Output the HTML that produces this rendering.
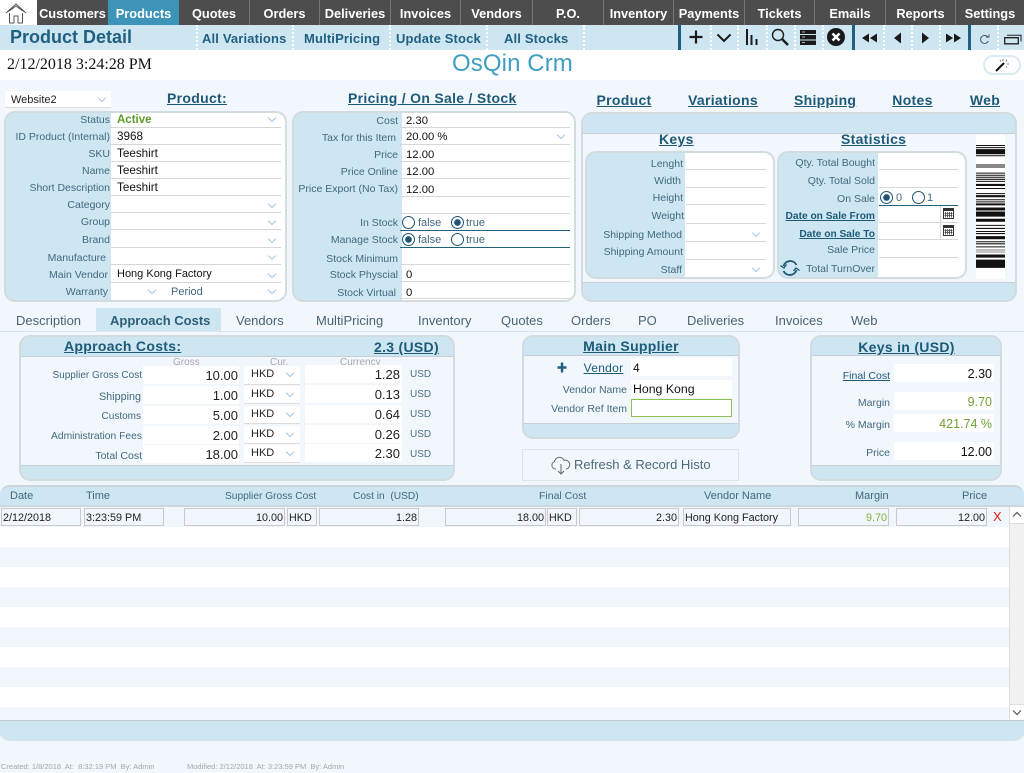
<!DOCTYPE html>
<html><head><meta charset="utf-8"><title>Product Detail</title>
<style>
html,body{margin:0;padding:0;width:1024px;height:773px;overflow:hidden;background:#f2f7fd;font-family:"Liberation Sans",sans-serif;}
#p{position:relative;width:1024px;height:773px;overflow:hidden}
#p div,#p span.a,#p svg{position:absolute}
.b{box-sizing:border-box}
.n{top:0;height:25px;line-height:27px;text-align:center;color:#fff;font-weight:bold;font-size:12.8px;border-left:1px solid #777;box-sizing:border-box;white-space:nowrap}
.s{top:25px;height:25px;line-height:27px;color:#1f5f80;font-weight:bold;font-size:13px;white-space:nowrap;letter-spacing:.15px}
.d{top:25px;height:25px;width:0;border-left:2px dotted #fff}
.k{top:25px;height:25px;width:3px;background:#1f5f80}
.h{color:#1c5a78;font-weight:bold;font-size:14px;letter-spacing:.3px;text-decoration:underline;white-space:nowrap;line-height:16px;text-align:center}
.l{left:0;margin-top:1px;text-align:right;color:#41697e;font-size:10.5px;line-height:14px;white-space:nowrap}
.v{color:#111;font-size:12px;line-height:14px;white-space:nowrap}
.rl{height:0;border-top:1px solid #d6d6d6}
.dk{height:0;border-top:1px solid #1f5f80}
.c{width:5px;height:5px;border-right:1px solid #a3c6ea;border-bottom:1px solid #a3c6ea;transform:rotate(45deg)}
.r{width:11px;height:11px;border:1px solid #1f5570;border-radius:50%;background:#fff;box-sizing:content-box}
.on{background:radial-gradient(circle,#1f5570 0,#1f5570 3px,#fff 3.6px)}
.pn{background:#cde6f2;border:2px solid #d2dcdf;border-radius:11px;box-sizing:border-box;overflow:hidden}
.w{background:#fff}
.g{color:#aaa;font-size:10px;line-height:12px}
.tab{top:308px;height:23px;line-height:26px;font-size:13px;color:#4a6472;white-space:nowrap}
.r1{text-align:right;color:#222;font-size:13px;line-height:16px;white-space:nowrap}
.u{color:#4c6f82;font-size:10px;line-height:12px}
.hk{color:#222;font-size:11px;line-height:14px}
.th{top:490px;color:#41697e;font-size:11px;line-height:13px;white-space:nowrap}
.cell{top:508px;height:18px;box-sizing:border-box;border:1px solid #c9c9c9;background:#f1f6fc;font-size:10.8px;line-height:18px;color:#222;white-space:nowrap;padding:0 1px;overflow:hidden}
.st{left:0;width:1009px;height:20px;background:#f1f6fc}
</style></head><body><div id="p">

<div style="left:0;top:0;width:1024px;height:25px;background:#4d4d4d"></div>
<div style="left:0;top:0;width:37px;height:25px;background:#fff"></div>
<svg style="left:5px;top:2px" width="22" height="22" viewBox="0 0 22 22" fill="none" stroke="#555" stroke-width="1"><path d="M1 11 L11 2 L21 11 M3.5 9.5 L11 4 L18.5 9.5 M4.5 11 V21 H9 V14 H13 V21 H17.5 V11"/></svg>
<div class="n" style="left:37px;width:71px;border-left:0">Customers</div>
<div class="n" style="left:108px;width:71px;background:#3d94b8;border-left:0">Products</div>
<div class="n" style="left:179px;width:70px;border-left:0">Quotes</div>
<div class="n" style="left:249px;width:70px">Orders</div>
<div class="n" style="left:319px;width:71px">Deliveries</div>
<div class="n" style="left:390px;width:70px">Invoices</div>
<div class="n" style="left:460px;width:72px">Vendors</div>
<div class="n" style="left:532px;width:71px">P.O.</div>
<div class="n" style="left:603px;width:70px">Inventory</div>
<div class="n" style="left:673px;width:71px">Payments</div>
<div class="n" style="left:744px;width:70px">Tickets</div>
<div class="n" style="left:814px;width:71px">Emails</div>
<div class="n" style="left:885px;width:70px">Reports</div>
<div class="n" style="left:955px;width:69px">Settings</div>

<div style="left:0;top:25px;width:1024px;height:25px;background:#cde6f2"></div>
<div style="left:10px;top:25px;height:25px;line-height:24px;font-size:18px;font-weight:bold;color:#1f5f80;white-space:nowrap">Product Detail</div>
<div class="s" style="left:202px">All Variations</div>
<div class="s" style="left:304px">MultiPricing</div>
<div class="s" style="left:396px">Update Stock</div>
<div class="s" style="left:504px">All Stocks</div>
<div class="d" style="left:196px"></div><div class="d" style="left:292px"></div><div class="d" style="left:389px"></div><div class="d" style="left:486px"></div><div class="d" style="left:583px"></div>
<div class="k" style="left:678px"></div><div class="k" style="left:852px"></div><div class="k" style="left:968px"></div>
<div class="d" style="left:710px"></div><div class="d" style="left:737px"></div><div class="d" style="left:766px"></div><div class="d" style="left:794px"></div><div class="d" style="left:822px"></div>
<div class="d" style="left:883px"></div><div class="d" style="left:911px"></div><div class="d" style="left:939px"></div><div class="d" style="left:997px"></div>

<svg style="left:688px;top:29px" width="16" height="16" viewBox="0 0 16 16"><path d="M8 1.5V14.5M1.5 8H14.5" stroke="#1a1a1a" stroke-width="2.2"/></svg>
<svg style="left:716px;top:32px" width="16" height="12" viewBox="0 0 16 12"><path d="M1.5 2.5L8 9L14.5 2.5" stroke="#1a1a1a" stroke-width="2" fill="none"/></svg>
<svg style="left:745px;top:29px" width="14" height="17" viewBox="0 0 14 17"><path d="M2 0V16M6.500 6V16M11.500 10V16" stroke="#1a1a1a" stroke-width="2" fill="none"/></svg>
<svg style="left:771px;top:28px" width="18" height="18" viewBox="0 0 18 18"><circle cx="7" cy="7" r="5.5" stroke="#1a1a1a" stroke-width="1.4" fill="none"/><path d="M11 11L17 17" stroke="#1a1a1a" stroke-width="2.4"/></svg>
<svg style="left:800px;top:30px" width="16" height="15" viewBox="0 0 16 15"><path d="M0 0H16V4H0ZM0 5H16V9.500H0ZM0 10.500H16V15H0Z" fill="#1a1a1a"/><path d="M2 2H5M2 7H5M2 12.500H5" stroke="#cde6f2" stroke-width=".8"/></svg>
<svg style="left:827px;top:28px" width="18" height="18" viewBox="0 0 18 18"><circle cx="9" cy="9" r="9" fill="#1a1a1a"/><path d="M5.500 5.500L12.500 12.500M12.500 5.500L5.500 12.500" stroke="#fff" stroke-width="2.600"/></svg>
<svg style="left:862px;top:33px" width="16" height="10" viewBox="0 0 16 10"><path d="M0 5L7 0.500V9.500ZM8 5L15 0.500V9.500Z" fill="#1a1a1a"/></svg>
<svg style="left:893px;top:32px" width="10" height="12" viewBox="0 0 10 12"><path d="M1 6L8 0.500V11.500Z" fill="#1a1a1a"/></svg>
<svg style="left:921px;top:32px" width="10" height="12" viewBox="0 0 10 12"><path d="M8 6L1 0.500V11.500Z" fill="#1a1a1a"/></svg>
<svg style="left:946px;top:33px" width="16" height="10" viewBox="0 0 16 10"><path d="M7 5L0 0.500V9.500ZM15 5L8 0.500V9.500Z" fill="#1a1a1a"/></svg>
<svg style="left:979px;top:34px" width="11" height="11" viewBox="0 0 11 11"><path d="M8.800 3A4 4 0 1 0 9.300 7" stroke="#444" stroke-width=".9" fill="none"/><path d="M7 3H10V0.500" stroke="#444" stroke-width=".9" fill="none"/></svg>
<svg style="left:1004px;top:34px" width="18" height="11" viewBox="0 0 18 11"><path d="M0.700 3.700H14.300V9.800H0.700Z" stroke="#222" stroke-width="1.300" fill="none"/><path d="M3 1.200H17V7.500" stroke="#222" stroke-width="1" fill="none"/></svg>

<div style="left:0;top:50px;width:1024px;height:30px;background:#fff"></div>
<div style="left:7px;top:56px;font-family:'Liberation Serif',serif;font-size:16px;line-height:18px;color:#111;white-space:nowrap">2/12/2018 3:24:28 PM</div>
<div style="left:452px;top:50px;font-size:24px;line-height:28px;color:#3f9fc2;white-space:nowrap;letter-spacing:.1px">OsQin Crm</div>
<div class="b" style="left:983px;top:55px;width:38px;height:20px;border:2px solid #d8ebf5;border-radius:10px;background:#fff"></div>
<svg style="left:995px;top:58px" width="16" height="14" viewBox="0 0 16 14"><path d="M1 13L9 5" stroke="#111" stroke-width="2"/><path d="M8 1V3M12 1.500L11 3.500M14 6H12M12 9.500L11 8.500M5 2L6 3.500" stroke="#777" stroke-width="1"/></svg>

<div class="w" style="left:5px;top:91px;width:106px;height:16px;border-bottom:1px solid #ddd"></div>
<div class="v" style="left:11px;top:93px;font-size:11px;color:#222">Website2</div>
<div class="c" style="left:99px;top:95px"></div>
<div class="h" style="left:167px;top:90px;width:60px">Product:</div>
<div class="h" style="left:348px;top:90px;width:167px">Pricing / On Sale / Stock</div>
<div class="h" style="left:596px;top:92px;width:56px">Product</div>
<div class="h" style="left:688px;top:92px;width:69px">Variations</div>
<div class="h" style="left:794px;top:92px;width:62px">Shipping</div>
<div class="h" style="left:892px;top:92px;width:41px">Notes</div>
<div class="h" style="left:969px;top:92px;width:32px">Web</div>

<!-- Product panel -->
<div class="pn" style="left:4px;top:111px;width:283px;height:191px"><div class="w" style="left:105px;top:-2px;width:180px;height:193px"></div></div>
<div class="rl" style="left:111px;top:127px;width:170px"></div><div class="rl" style="left:111px;top:144px;width:170px"></div><div class="rl" style="left:111px;top:161px;width:170px"></div><div class="rl" style="left:111px;top:178px;width:170px"></div><div class="rl" style="left:111px;top:195px;width:170px"></div><div class="rl" style="left:111px;top:212px;width:170px"></div><div class="rl" style="left:111px;top:229px;width:170px"></div><div class="rl" style="left:111px;top:247px;width:170px"></div><div class="rl" style="left:111px;top:264px;width:170px"></div><div class="rl" style="left:111px;top:282px;width:170px"></div>
<div class="l" style="top:112px;width:110px">Status</div>
<div class="l" style="top:129px;width:110px">ID Product (Internal)</div>
<div class="l" style="top:146px;width:110px">SKU</div>
<div class="l" style="top:163px;width:110px">Name</div>
<div class="l" style="top:180px;width:110px">Short Description</div>
<div class="l" style="top:197px;width:110px">Category</div>
<div class="l" style="top:214px;width:110px">Group</div>
<div class="l" style="top:232px;width:110px">Brand</div>
<div class="l" style="top:250px;width:106px">Manufacture</div>
<div class="l" style="top:267px;width:108px">Main Vendor</div>
<div class="l" style="top:284px;width:108px">Warranty</div>
<div class="v" style="left:117px;top:113px;font-weight:bold;font-size:11.5px;color:#5d9b2a">Active</div>
<div class="v" style="left:117px;top:130px;font-size:11.7px">3968</div>
<div class="v" style="left:117px;top:147px;font-size:11.7px">Teeshirt</div>
<div class="v" style="left:117px;top:164px;font-size:11.7px">Teeshirt</div>
<div class="v" style="left:117px;top:181px;font-size:11.7px">Teeshirt</div>
<div class="v" style="left:117px;top:267px;font-size:11px">Hong Kong Factory</div>
<div class="v" style="left:171px;top:285px;font-size:11px;color:#41697e">Period</div>
<div class="c" style="left:269px;top:115px"></div><div class="c" style="left:269px;top:201px"></div><div class="c" style="left:269px;top:218px"></div><div class="c" style="left:269px;top:236px"></div><div class="c" style="left:269px;top:253px"></div><div class="c" style="left:269px;top:271px"></div><div class="c" style="left:269px;top:287px"></div><div class="c" style="left:149px;top:287px"></div>

<!-- Pricing panel -->
<div class="pn" style="left:292px;top:111px;width:284px;height:191px"><div class="w" style="left:108px;top:-2px;width:176px;height:193px"></div></div>
<div class="rl" style="left:400px;top:127px;width:170px"></div><div class="rl" style="left:400px;top:144px;width:170px"></div><div class="rl" style="left:400px;top:161px;width:170px"></div><div class="rl" style="left:400px;top:178px;width:170px"></div><div class="rl" style="left:400px;top:196px;width:170px"></div><div class="rl" style="left:400px;top:213px;width:170px"></div><div class="dk" style="left:400px;top:230px;width:170px"></div><div class="dk" style="left:400px;top:247px;width:170px"></div><div class="rl" style="left:400px;top:264px;width:170px"></div><div class="rl" style="left:400px;top:281px;width:170px"></div><div class="rl" style="left:400px;top:298px;width:170px"></div>
<div class="l" style="top:113px;width:398px">Cost</div>
<div class="l" style="top:130px;width:396px">Tax for this Item</div>
<div class="l" style="top:147px;width:398px">Price</div>
<div class="l" style="top:164px;width:398px">Price Online</div>
<div class="l" style="top:181px;width:398px">Price Export (No Tax)</div>
<div class="l" style="top:215px;width:398px">In Stock</div>
<div class="l" style="top:232px;width:398px">Manage Stock</div>
<div class="l" style="top:251px;width:398px">Stock Minimum</div>
<div class="l" style="top:267px;width:398px">Stock Physcial</div>
<div class="l" style="top:285px;width:396px">Stock Virtual</div>
<div class="v" style="left:406px;top:114px;font-size:11.3px">2.30</div>
<div class="v" style="left:406px;top:130px;font-size:11.3px">20.00 %</div>
<div class="v" style="left:406px;top:148px;font-size:11.3px">12.00</div>
<div class="v" style="left:406px;top:165px;font-size:11.3px">12.00</div>
<div class="v" style="left:406px;top:183px;font-size:11.3px">12.00</div>
<div class="v" style="left:406px;top:268px;font-size:11.3px">0</div>
<div class="v" style="left:406px;top:286px;font-size:11.3px">0</div>
<div class="c" style="left:558px;top:132px"></div>
<div class="r" style="left:402px;top:216px"></div><div class="r on" style="left:451px;top:216px"></div>
<div class="r on" style="left:402px;top:233px"></div><div class="r" style="left:451px;top:233px"></div>
<div class="v" style="left:418px;top:216px;font-size:11px;color:#41697e">false</div><div class="v" style="left:466px;top:216px;font-size:11px;color:#41697e">true</div>
<div class="v" style="left:418px;top:233px;font-size:11px;color:#41697e">false</div><div class="v" style="left:466px;top:233px;font-size:11px;color:#41697e">true</div>

<!-- Right panel -->
<div class="pn" style="left:581px;top:112px;width:436px;height:190px;background:#cde6f2"><div style="left:0;top:19px;width:432px;height:148px;background:#f2f7fd;border-top:1px solid #c4d0d6;border-bottom:1px solid #c4d0d6"></div></div>
<div class="h" style="left:659px;top:131px;width:34px">Keys</div>
<div class="h" style="left:841px;top:131px;width:64px">Statistics</div>
<div class="pn" style="left:585px;top:151px;width:190px;height:128px"><div class="w" style="left:98px;top:-2px;width:92px;height:128px"></div></div>
<div class="pn" style="left:777px;top:151px;width:190px;height:128px"><div class="w" style="left:99px;top:-2px;width:91px;height:128px"></div></div>
<div class="l" style="top:156px;width:683px">Lenght</div>
<div class="l" style="top:173px;width:681px">Width</div>
<div class="l" style="top:190px;width:683px">Height</div>
<div class="l" style="top:208px;width:684px">Weight</div>
<div class="l" style="top:227px;width:682px">Shipping Method</div>
<div class="l" style="top:244px;width:683px">Shipping Amount</div>
<div class="l" style="top:262px;width:682px">Staff</div>
<div class="rl" style="left:686px;top:169px;width:80px"></div><div class="rl" style="left:686px;top:187px;width:80px"></div><div class="rl" style="left:686px;top:204px;width:80px"></div><div class="rl" style="left:686px;top:223px;width:80px"></div><div class="rl" style="left:686px;top:241px;width:80px"></div><div class="rl" style="left:686px;top:259px;width:80px"></div>
<div class="c" style="left:753px;top:230px"></div><div class="c" style="left:753px;top:265px"></div>
<div class="l" style="top:155px;width:875px">Qty. Total Bought</div>
<div class="l" style="top:173px;width:875px">Qty. Total Sold</div>
<div class="l" style="top:191px;width:875px">On Sale</div>
<div class="l" style="top:209px;width:875px;font-weight:bold;font-size:10.2px;color:#1c5a78;text-decoration:underline">Date on Sale From</div>
<div class="l" style="top:227px;width:875px;font-weight:bold;font-size:10.2px;color:#1c5a78;text-decoration:underline">Date on Sale To</div>
<div class="l" style="top:242px;width:875px">Sale Price</div>
<div class="l" style="top:261px;width:875px">Total TurnOver</div>
<div class="rl" style="left:879px;top:169px;width:79px"></div><div class="rl" style="left:879px;top:187px;width:79px"></div><div class="dk" style="left:879px;top:205px;width:79px"></div><div class="rl" style="left:879px;top:222px;width:79px"></div><div class="rl" style="left:879px;top:239px;width:79px"></div><div class="rl" style="left:879px;top:257px;width:79px"></div>
<div class="r on" style="left:880px;top:191px"></div><div class="r" style="left:912px;top:191px"></div>
<div class="v" style="left:896px;top:191px;font-size:11px;color:#41697e">0</div><div class="v" style="left:927px;top:191px;font-size:11px;color:#41697e">1</div>
<div style="left:940px;top:206px;width:1px;height:33px;background:#d6d6d6"></div>
<svg style="left:943px;top:208px" width="11" height="11" viewBox="0 0 11 11"><path d="M0 0H11V11H0Z" fill="#333"/><path d="M1 3H10V10H1Z" fill="#fff"/><path d="M2.500 4V9.500M4.500 4V9.500M6.500 4V9.500M8.500 4V9.500M1.500 5.500H9.500M1.500 7.500H9.500" stroke="#444" stroke-width=".8"/></svg>
<svg style="left:943px;top:225px" width="11" height="11" viewBox="0 0 11 11"><path d="M0 0H11V11H0Z" fill="#333"/><path d="M1 3H10V10H1Z" fill="#fff"/><path d="M2.500 4V9.500M4.500 4V9.500M6.500 4V9.500M8.500 4V9.500M1.500 5.500H9.500M1.500 7.500H9.500" stroke="#444" stroke-width=".8"/></svg>
<svg style="left:780px;top:259px" width="20" height="18" viewBox="0 0 20 18" fill="none" stroke="#1f5570" stroke-width="1.800"><path d="M3.500 7A7 7 0 0 1 16.500 6"/><path d="M16.500 11A7 7 0 0 1 3.500 12"/><path d="M0.500 6.500L4 9L6.500 5.500" stroke-width="1.300"/><path d="M13.500 12L16 9L19.500 11.500" stroke-width="1.300"/></svg>
<div class="w" style="left:976px;top:135px;width:29px;height:144px"></div>
<svg style="left:976px;top:144px" width="29" height="130" viewBox="0 0 29 127" preserveAspectRatio="none" fill="#111"><path d="M0 1h29v1H0zM0 3h29v1H0zM0 5h29v5H0zM0 11h29v1H0zM0 20h29v1H0zM0 22h29v1H0zM0 28h29v1H0zM0 30h29v1H0zM0 32h29v1H0zM0 34h29v1H0zM0 36h29v1H0zM0 39h29v2H0zM0 43h29v1H0zM0 48h29v1H0zM0 50h29v2H0zM0 54h29v1H0zM0 56h29v1H0zM0 58h29v2H0zM0 62h29v3H0zM0 66h29v5H0zM0 73h29v3H0zM0 79h29v1H0zM0 82h29v1H0zM0 85h29v1H0zM0 87h29v1H0zM0 90h29v3H0zM0 95h29v1H0zM0 97h29v1H0zM0 100h29v1H0zM0 108h29v3H0zM0 113h29v8H0z"/><path d="M0 103h29v1H0zM0 105h29v1H0z" fill="#888"/></svg>

<!-- Tabs -->
<div style="left:0;top:331px;width:1024px;height:1px;background:#d8e5ec"></div>
<div style="left:96px;top:308px;width:125px;height:23px;background:#cde6f2"></div>
<div class="tab" style="left:16px">Description</div>
<div class="tab" style="left:110px;font-weight:bold;color:#2d5f78">Approach Costs</div>
<div class="tab" style="left:236px">Vendors</div>
<div class="tab" style="left:316px">MultiPricing</div>
<div class="tab" style="left:418px">Inventory</div>
<div class="tab" style="left:501px">Quotes</div>
<div class="tab" style="left:571px">Orders</div>
<div class="tab" style="left:638px">PO</div>
<div class="tab" style="left:687px">Deliveries</div>
<div class="tab" style="left:775px">Invoices</div>
<div class="tab" style="left:851px">Web</div>

<!-- Approach -->
<div class="pn" style="left:19px;top:335px;width:436px;height:146px"><div style="left:0;top:19px;width:432px;height:108px;background:#f2f7fd;border-top:1px solid #c4d0d6;border-bottom:1px solid #c4d0d6"></div></div>
<div class="h" style="left:64px;top:338px;width:116px">Approach Costs:</div>
<div class="h" style="left:374px;top:339px;width:63px">2.3 (USD)</div>
<div class="g" style="left:173px;top:357px">Gross</div><div class="g" style="left:270px;top:357px">Cur.</div><div class="g" style="left:340px;top:357px">Currency</div>
<div class="l" style="top:368px;width:142px;font-size:10px">Supplier Gross Cost</div>
<div class="l" style="top:389px;width:141px;font-size:10.8px">Shipping</div>
<div class="l" style="top:409px;width:141px;font-size:10px">Customs</div>
<div class="l" style="top:429px;width:142px;font-size:10.3px">Administration Fees</div>
<div class="l" style="top:448px;width:142px">Total Cost</div>
<div class="w" style="left:143px;top:366px;width:96px;height:18px"></div><div class="w" style="left:143px;top:386px;width:96px;height:18px"></div><div class="w" style="left:143px;top:406px;width:96px;height:18px"></div><div class="w" style="left:143px;top:426px;width:96px;height:18px"></div><div class="w" style="left:143px;top:445px;width:96px;height:18px"></div>
<div class="w" style="left:244px;top:366px;width:56px;height:18px;border-bottom:1px solid #ddd"></div><div class="w" style="left:244px;top:386px;width:56px;height:17px;border-bottom:1px solid #ddd"></div><div class="w" style="left:244px;top:406px;width:56px;height:17px;border-bottom:1px solid #ddd"></div><div class="w" style="left:244px;top:426px;width:56px;height:17px;border-bottom:1px solid #ddd"></div><div class="w" style="left:244px;top:445px;width:56px;height:17px;border-bottom:1px solid #ddd"></div>
<div class="w" style="left:305px;top:365px;width:97px;height:18px"></div><div class="w" style="left:305px;top:385px;width:97px;height:18px"></div><div class="w" style="left:305px;top:405px;width:97px;height:18px"></div><div class="w" style="left:305px;top:425px;width:97px;height:18px"></div><div class="w" style="left:305px;top:444px;width:97px;height:18px"></div>
<div class="r1" style="left:143px;top:368px;width:95px">10.00</div><div class="r1" style="left:143px;top:388px;width:95px">1.00</div><div class="r1" style="left:143px;top:408px;width:95px">5.00</div><div class="r1" style="left:143px;top:428px;width:95px">2.00</div><div class="r1" style="left:143px;top:447px;width:95px">18.00</div>
<div class="r1" style="left:305px;top:367px;width:95px">1.28</div><div class="r1" style="left:305px;top:387px;width:95px">0.13</div><div class="r1" style="left:305px;top:407px;width:95px">0.64</div><div class="r1" style="left:305px;top:427px;width:95px">0.26</div><div class="r1" style="left:305px;top:446px;width:95px">2.30</div>
<div class="hk" style="left:251px;top:367px">HKD</div><div class="hk" style="left:251px;top:387px">HKD</div><div class="hk" style="left:251px;top:407px">HKD</div><div class="hk" style="left:251px;top:427px">HKD</div><div class="hk" style="left:251px;top:446px">HKD</div>
<div class="c" style="left:287px;top:370px"></div><div class="c" style="left:287px;top:390px"></div><div class="c" style="left:287px;top:410px"></div><div class="c" style="left:287px;top:430px"></div><div class="c" style="left:287px;top:449px"></div>
<div class="u" style="left:410px;top:369px">USD</div><div class="u" style="left:410px;top:389px">USD</div><div class="u" style="left:410px;top:409px">USD</div><div class="u" style="left:410px;top:429px">USD</div><div class="u" style="left:410px;top:449px">USD</div>

<!-- Main supplier -->
<div class="pn" style="left:522px;top:335px;width:218px;height:104px"><div style="left:0;top:18px;width:214px;height:67px;background:#f2f7fd;border-top:1px solid #c4d0d6;border-bottom:1px solid #c4d0d6"></div></div>
<div class="h" style="left:522px;top:338px;width:218px">Main Supplier</div>
<svg style="left:557px;top:362px" width="10" height="11" viewBox="0 0 10 11"><path d="M5 0.500V10.500M0.500 5.500H9.500" stroke="#1f5f80" stroke-width="2.400"/></svg>
<div class="h" style="left:583px;top:360px;width:41px;font-weight:normal;font-size:12px">Vendor</div>
<div class="w" style="left:631px;top:358px;width:101px;height:18px"></div>
<div class="w" style="left:631px;top:380px;width:101px;height:18px"></div>
<div class="b" style="left:631px;top:399px;width:101px;height:18px;background:#fff;border:1px solid #8cc152"></div>
<div class="v" style="left:633px;top:361px">4</div>
<div class="v" style="left:633px;top:382px;font-size:12.3px">Hong Kong</div>
<div class="l" style="top:382px;width:627px">Vendor Name</div>
<div class="l" style="top:401px;width:627px">Vendor Ref Item</div>

<div class="b" style="left:522px;top:449px;width:217px;height:32px;border:1px solid #dde3e7;background:#f2f7fd"></div>
<svg style="left:551px;top:456px" width="20" height="19" viewBox="0 0 20 19" fill="none" stroke="#666" stroke-width="1"><path d="M5 13H4.500A3.800 3.800 0 0 1 3.500 5.600A5 5 0 0 1 13 4.300A4.400 4.400 0 0 1 15.500 13H15"/><path d="M10 8V18M7 15L10 18L13 15"/></svg>
<div style="left:574px;top:457px;font-size:13px;line-height:16px;color:#4c6a7a;white-space:nowrap">Refresh &amp; Record Histo</div>

<!-- Keys in -->
<div class="pn" style="left:810px;top:335px;width:192px;height:146px"><div style="left:0;top:18px;width:188px;height:109px;background:#f2f7fd;border-top:1px solid #c4d0d6;border-bottom:1px solid #c4d0d6"></div></div>
<div class="h" style="left:810px;top:339px;width:193px">Keys in (USD)</div>
<div class="w" style="left:894px;top:364px;width:100px;height:18px"></div><div class="w" style="left:894px;top:392px;width:100px;height:18px"></div><div class="w" style="left:894px;top:414px;width:100px;height:18px"></div><div class="w" style="left:894px;top:442px;width:100px;height:18px"></div>
<div class="l" style="top:368px;width:890px;text-decoration:underline;color:#1c5a78">Final Cost</div>
<div class="l" style="top:395px;width:890px">Margin</div>
<div class="l" style="top:417px;width:890px">% Margin</div>
<div class="l" style="top:445px;width:890px">Price</div>
<div class="r1" style="left:894px;top:366px;width:98px;font-size:12.500px;color:#111">2.30</div>
<div class="r1" style="left:894px;top:394px;width:98px;font-size:12.500px;color:#6f9f32">9.70</div>
<div class="r1" style="left:894px;top:416px;width:98px;font-size:12.500px;color:#6f9f32">421.74 %</div>
<div class="r1" style="left:894px;top:444px;width:98px;font-size:12.500px;color:#111">12.00</div>

<!-- Table -->
<div class="b" style="left:0;top:485px;width:1024px;height:22px;background:#cde6f2;border-top:2px solid #ccd6da;border-bottom:2px solid #cdd6da;border-radius:10px 10px 0 0"></div>
<div class="th" style="left:10px">Date</div><div class="th" style="left:86px">Time</div><div class="th" style="left:225px;font-size:10.2px">Supplier Gross Cost</div><div class="th" style="left:353px;font-size:10.2px">Cost in&nbsp; (USD)</div><div class="th" style="left:539px;font-size:10.5px">Final Cost</div><div class="th" style="left:704px">Vendor Name</div><div class="th" style="left:855px">Margin</div><div class="th" style="left:962px">Price</div>
<div style="left:0;top:507px;width:1024px;height:213px;background:#fff"></div>
<div class="st" style="top:507px;height:20px"></div><div class="st" style="top:547px"></div><div class="st" style="top:587px"></div><div class="st" style="top:627px"></div><div class="st" style="top:667px"></div><div class="st" style="top:707px;height:13px"></div>
<div class="cell" style="left:1px;width:80px">2/12/2018</div>
<div class="cell" style="left:84px;width:80px">3:23:59 PM</div>
<div class="cell" style="left:184px;width:101px;text-align:right">10.00</div>
<div class="cell" style="left:287px;width:30px">HKD</div>
<div class="cell" style="left:319px;width:100px;text-align:right">1.28</div>
<div class="cell" style="left:445px;width:101px;text-align:right">18.00</div>
<div class="cell" style="left:547px;width:30px">HKD</div>
<div class="cell" style="left:579px;width:100px;text-align:right">2.30</div>
<div class="cell" style="left:683px;width:108px">Hong Kong Factory</div>
<div class="cell" style="left:798px;width:91px;text-align:right;color:#7fb23c">9.70</div>
<div class="cell" style="left:896px;width:91px;text-align:right">12.00</div>
<div style="left:993px;top:509px;font-size:13px;line-height:16px;color:#e81c1c">X</div>
<div style="left:1009px;top:507px;width:15px;height:213px;background:#f1f1f1;border-left:1px solid #ddd;box-sizing:border-box"></div>
<div style="left:1009px;top:507px;width:15px;height:17px;background:#fff;border-left:1px solid #ddd;border-bottom:1px solid #ddd;box-sizing:border-box"></div>
<div style="left:1009px;top:704px;width:15px;height:16px;background:#fff;border-left:1px solid #ddd;border-top:1px solid #ddd;box-sizing:border-box"></div>
<svg style="left:1012px;top:511px" width="10" height="7" viewBox="0 0 10 7"><path d="M1 5.500L5 1.500L9 5.500" stroke="#555" stroke-width="1.200" fill="none"/></svg>
<svg style="left:1012px;top:709px" width="10" height="7" viewBox="0 0 10 7"><path d="M1 1.500L5 5.500L9 1.500" stroke="#555" stroke-width="1.200" fill="none"/></svg>
<div class="b" style="left:-1px;top:720px;width:1026px;height:21px;background:#cde6f2;border-top:1px solid #bfcbd1;border-bottom:1px solid #d8e2e7;border-radius:0 0 11px 11px"></div>

<div style="left:1px;top:762px;font-size:7.5px;line-height:10px;color:#a6a6a6;white-space:pre">Created: 1/8/2018  At:  8:32:19 PM  By: Admin</div>
<div style="left:187px;top:762px;font-size:7.5px;line-height:10px;color:#a6a6a6;white-space:pre">Modified: 2/12/2018  At: 3:23:59 PM  By: Admin</div>
</div></body></html>
